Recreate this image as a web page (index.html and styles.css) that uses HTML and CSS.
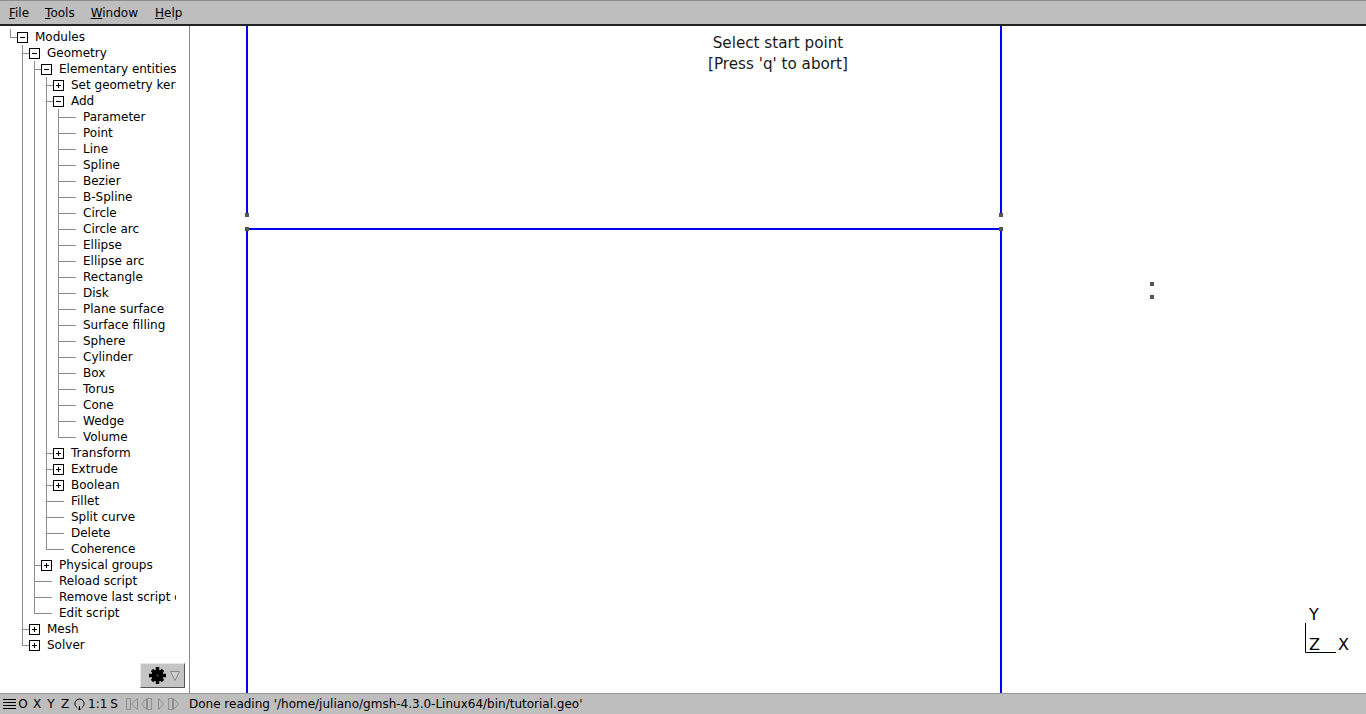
FILE: index.html
```html
<!DOCTYPE html>
<html lang="en">
<head>
	<meta charset="UTF-8">
	<title>Gmsh</title>
	<link rel="stylesheet" href="styles.css">
</head>
<body>
	<div class="menu-bar">
		<span class="menu-item"><u>F</u>ile</span>
		<span class="menu-item"><u>T</u>ools</span>
		<span class="menu-item"><u>W</u>indow</span>
		<span class="menu-item"><u>H</u>elp</span>
	</div>

	<div class="main">
		<div class="side">
			<div class="tree">
				<div class="row"><i class="g elbow"></i><i class="box minus"></i><span>Modules</span></div>
				<div class="row"><i class="g"></i><i class="g tee"></i><i class="box minus"></i><span>Geometry</span></div>
				<div class="row"><i class="g"></i><i class="g pipe"></i><i class="g tee"></i><i class="box minus"></i><span>Elementary entities</span></div>
				<div class="row"><i class="g"></i><i class="g pipe"></i><i class="g pipe"></i><i class="g tee"></i><i class="box plus"></i><span>Set geometry kernel</span></div>
				<div class="row"><i class="g"></i><i class="g pipe"></i><i class="g pipe"></i><i class="g tee"></i><i class="box minus"></i><span>Add</span></div>
				<div class="row"><i class="g"></i><i class="g pipe"></i><i class="g pipe"></i><i class="g pipe"></i><i class="g tee"></i><i class="stub"></i><span>Parameter</span></div>
				<div class="row"><i class="g"></i><i class="g pipe"></i><i class="g pipe"></i><i class="g pipe"></i><i class="g tee"></i><i class="stub"></i><span>Point</span></div>
				<div class="row"><i class="g"></i><i class="g pipe"></i><i class="g pipe"></i><i class="g pipe"></i><i class="g tee"></i><i class="stub"></i><span>Line</span></div>
				<div class="row"><i class="g"></i><i class="g pipe"></i><i class="g pipe"></i><i class="g pipe"></i><i class="g tee"></i><i class="stub"></i><span>Spline</span></div>
				<div class="row"><i class="g"></i><i class="g pipe"></i><i class="g pipe"></i><i class="g pipe"></i><i class="g tee"></i><i class="stub"></i><span>Bezier</span></div>
				<div class="row"><i class="g"></i><i class="g pipe"></i><i class="g pipe"></i><i class="g pipe"></i><i class="g tee"></i><i class="stub"></i><span>B-Spline</span></div>
				<div class="row"><i class="g"></i><i class="g pipe"></i><i class="g pipe"></i><i class="g pipe"></i><i class="g tee"></i><i class="stub"></i><span>Circle</span></div>
				<div class="row"><i class="g"></i><i class="g pipe"></i><i class="g pipe"></i><i class="g pipe"></i><i class="g tee"></i><i class="stub"></i><span>Circle arc</span></div>
				<div class="row"><i class="g"></i><i class="g pipe"></i><i class="g pipe"></i><i class="g pipe"></i><i class="g tee"></i><i class="stub"></i><span>Ellipse</span></div>
				<div class="row"><i class="g"></i><i class="g pipe"></i><i class="g pipe"></i><i class="g pipe"></i><i class="g tee"></i><i class="stub"></i><span>Ellipse arc</span></div>
				<div class="row"><i class="g"></i><i class="g pipe"></i><i class="g pipe"></i><i class="g pipe"></i><i class="g tee"></i><i class="stub"></i><span>Rectangle</span></div>
				<div class="row"><i class="g"></i><i class="g pipe"></i><i class="g pipe"></i><i class="g pipe"></i><i class="g tee"></i><i class="stub"></i><span>Disk</span></div>
				<div class="row"><i class="g"></i><i class="g pipe"></i><i class="g pipe"></i><i class="g pipe"></i><i class="g tee"></i><i class="stub"></i><span>Plane surface</span></div>
				<div class="row"><i class="g"></i><i class="g pipe"></i><i class="g pipe"></i><i class="g pipe"></i><i class="g tee"></i><i class="stub"></i><span>Surface filling</span></div>
				<div class="row"><i class="g"></i><i class="g pipe"></i><i class="g pipe"></i><i class="g pipe"></i><i class="g tee"></i><i class="stub"></i><span>Sphere</span></div>
				<div class="row"><i class="g"></i><i class="g pipe"></i><i class="g pipe"></i><i class="g pipe"></i><i class="g tee"></i><i class="stub"></i><span>Cylinder</span></div>
				<div class="row"><i class="g"></i><i class="g pipe"></i><i class="g pipe"></i><i class="g pipe"></i><i class="g tee"></i><i class="stub"></i><span>Box</span></div>
				<div class="row"><i class="g"></i><i class="g pipe"></i><i class="g pipe"></i><i class="g pipe"></i><i class="g tee"></i><i class="stub"></i><span>Torus</span></div>
				<div class="row"><i class="g"></i><i class="g pipe"></i><i class="g pipe"></i><i class="g pipe"></i><i class="g tee"></i><i class="stub"></i><span>Cone</span></div>
				<div class="row"><i class="g"></i><i class="g pipe"></i><i class="g pipe"></i><i class="g pipe"></i><i class="g tee"></i><i class="stub"></i><span>Wedge</span></div>
				<div class="row"><i class="g"></i><i class="g pipe"></i><i class="g pipe"></i><i class="g pipe"></i><i class="g elbow"></i><i class="stub"></i><span>Volume</span></div>
				<div class="row"><i class="g"></i><i class="g pipe"></i><i class="g pipe"></i><i class="g tee"></i><i class="box plus"></i><span>Transform</span></div>
				<div class="row"><i class="g"></i><i class="g pipe"></i><i class="g pipe"></i><i class="g tee"></i><i class="box plus"></i><span>Extrude</span></div>
				<div class="row"><i class="g"></i><i class="g pipe"></i><i class="g pipe"></i><i class="g tee"></i><i class="box plus"></i><span>Boolean</span></div>
				<div class="row"><i class="g"></i><i class="g pipe"></i><i class="g pipe"></i><i class="g tee"></i><i class="stub"></i><span>Fillet</span></div>
				<div class="row"><i class="g"></i><i class="g pipe"></i><i class="g pipe"></i><i class="g tee"></i><i class="stub"></i><span>Split curve</span></div>
				<div class="row"><i class="g"></i><i class="g pipe"></i><i class="g pipe"></i><i class="g tee"></i><i class="stub"></i><span>Delete</span></div>
				<div class="row"><i class="g"></i><i class="g pipe"></i><i class="g pipe"></i><i class="g elbow"></i><i class="stub"></i><span>Coherence</span></div>
				<div class="row"><i class="g"></i><i class="g pipe"></i><i class="g tee"></i><i class="box plus"></i><span>Physical groups</span></div>
				<div class="row"><i class="g"></i><i class="g pipe"></i><i class="g tee"></i><i class="stub"></i><span>Reload script</span></div>
				<div class="row"><i class="g"></i><i class="g pipe"></i><i class="g tee"></i><i class="stub"></i><span>Remove last script command</span></div>
				<div class="row"><i class="g"></i><i class="g pipe"></i><i class="g elbow"></i><i class="stub"></i><span>Edit script</span></div>
				<div class="row"><i class="g"></i><i class="g tee"></i><i class="box plus"></i><span>Mesh</span></div>
				<div class="row"><i class="g"></i><i class="g elbow"></i><i class="box plus"></i><span>Solver</span></div>
			</div>
			<div class="gear-btn">
				<svg width="17" height="17" viewBox="0 0 17 17">
					<rect x="3" y="3" width="11" height="11" fill="#000"/>
					<path d="M8.5 0v17M0 8.5h17M3 3l11 11M14 3L3 14" stroke="#000" stroke-width="3.5"/>
					<rect x="7.500" y="7.500" width="2" height="2" fill="#444"/>
				</svg>
				<svg width="10" height="10" viewBox="0 0 10 10"><path d="M.5 .5h9L5 9.500z" fill="#cfcfcf" stroke="#8a8a8a"/></svg>
			</div>
		</div>

		<div class="canvas">
			<svg class="model" width="1176" height="667" viewBox="190 26 1176 667">
				<rect x="246" y="26" width="2" height="188" fill="#0000f0"/>
				<rect x="1000" y="26" width="2" height="188" fill="#0000f0"/>
				<rect x="246" y="228" width="2" height="465" fill="#0000f0"/>
				<rect x="1000" y="228" width="2" height="465" fill="#0000f0"/>
				<rect x="246" y="228" width="756" height="2" fill="#0000f0"/>
				<rect x="245" y="213" width="4" height="4" fill="#555"/>
				<rect x="999" y="213" width="4" height="4" fill="#555"/>
				<rect x="245" y="227" width="4" height="4" fill="#555"/>
				<rect x="999" y="227" width="4" height="4" fill="#555"/>
				<rect x="1150" y="282" width="4" height="4" fill="#555"/>
				<rect x="1150" y="295" width="4" height="4" fill="#555"/>
				<path d="M1305.5 623v29.500H1336" fill="none" stroke="#000"/>
			</svg>
			<div class="prompt">Select start point<br>[Press 'q' to abort]</div>
			<span class="axis axis-y">Y</span>
			<span class="axis axis-z">Z</span>
			<span class="axis axis-x">X</span>
		</div>
	</div>

	<div class="status-bar">
		<svg class="ico" width="13" height="13" viewBox="0 0 13 13"><path d="M0 1.500h13M0 4.500h13M0 7.500h13M0 10.500h13" stroke="#000"/></svg>
		<span class="st-btn">O</span>
		<span class="st-btn">X</span>
		<span class="st-btn">Y</span>
		<span class="st-btn">Z</span>
		<svg class="ico loop" width="11" height="13" viewBox="0 0 11 13"><path d="M3 9.500A4.600 4.600 0 1 1 8 9.500M5.500 8v4M4 10.500l1.500 1.500 1.500-1.500" fill="none" stroke="#000"/></svg>
		<span class="st-ratio">1:1</span>
		<span class="st-snap">S</span>
		<svg class="ico play" width="54" height="14" viewBox="0 0 54 14"><path d="M.5 1.500h4v11h-4zM11.500 1.500v11l-6-5.500zM20.500 1.500v11l-5-5.500zM21.500 1.500h4v11h-4zM32.500 1.500v11l5-5.500zM42.500 1.500h4v11h-4zM47.500 1.500v11l5-5.500z" fill="none" stroke="#8e8e8e"/></svg>
		<span class="st-msg">Done reading '/home/juliano/gmsh-4.3.0-Linux64/bin/tutorial.geo'</span>
	</div>
</body>
</html>
```

FILE: styles.css
```css
* {
	box-sizing: border-box;
}

html, body {
	margin: 0;
	height: 100%;
	overflow: hidden;
}

body {
	display: flex;
	flex-direction: column;
	font-family: "DejaVu Sans", sans-serif;
	font-size: 12px;
	color: #000;
	background: #fff;
}

.menu-bar {
	display: flex;
	flex: none;
	height: 26px;
	padding: 1px 0 0 9px;
	gap: 16px;
	align-items: center;
	background: #bebebe;
	border-top: 1px solid #8c8c8c;
	border-bottom: 2px solid #222;
}

.menu-item:last-child {
	margin-left: 1px;
}

.main {
	display: flex;
	flex: 1;
	min-height: 0;
}

.side {
	display: flex;
	flex-direction: column;
	justify-content: space-between;
	flex: none;
	width: 190px;
	padding: 3px 0 5px 5px;
	border-right: 1px solid #8c8c8c;
}

.tree {
	width: 171px;
	overflow: hidden;
}

.row {
	display: flex;
	height: 16px;
	line-height: 16px;
	white-space: nowrap;
}

.g {
	position: relative;
	flex: none;
	width: 12px;
	height: 16px;
}

/* connector lines of the tree */
.pipe::before, .tee::before {
	content: "";
	position: absolute;
	left: 5px;
	top: 0;
	width: 1px;
	height: 16px;
	background: #8c8c8c;
}

.elbow::before {
	content: "";
	position: absolute;
	left: 5px;
	top: 0;
	width: 1px;
	height: 8px;
	background: #8c8c8c;
}

.tee::after, .elbow::after {
	content: "";
	position: absolute;
	left: 5px;
	top: 8px;
	width: 7px;
	height: 1px;
	background: #8c8c8c;
}

.stub {
	flex: none;
	width: 18px;
	height: 9px;
	position: relative;
}

.stub::before {
	content: "";
	position: absolute;
	left: 0;
	top: 8px;
	width: 11px;
	height: 1px;
	background: #8c8c8c;
}

.box {
	position: relative;
	flex: none;
	width: 11px;
	height: 11px;
	margin: 3px 7px 2px 0;
	background: #fff;
	border: 1px solid #000;
}

.box::before {
	content: "";
	position: absolute;
	left: 2px;
	top: 4px;
	width: 5px;
	height: 1px;
	background: #000;
}

.plus::after {
	content: "";
	position: absolute;
	left: 4px;
	top: 2px;
	width: 1px;
	height: 5px;
	background: #000;
}

.gear-btn {
	display: flex;
	align-items: center;
	gap: 4px;
	align-self: flex-end;
	width: 45px;
	height: 25px;
	margin-right: 4px;
	padding-left: 8px;
	background: #c4c4c4;
	border: 1px solid;
	border-color: #e8e8e8 #555 #555 #e8e8e8;
}

.canvas {
	position: relative;
	flex: 1;
	overflow: hidden;
	background: #fff;
}

.model {
	position: absolute;
	left: 0;
	top: 0;
}

.prompt {
	position: absolute;
	left: 388px;
	top: 7px;
	width: 400px;
	text-align: center;
	font-size: 15.2px;
	line-height: 21px;
	color: #1a1a1a;
}

.axis {
	position: absolute;
	font-size: 16px;
	line-height: 18px;
}

.axis-y { left: 1119px; top: 580px; }
.axis-z { left: 1119px; top: 610px; }
.axis-x { left: 1148px; top: 610px; }

.status-bar {
	display: flex;
	flex: none;
	align-items: center;
	height: 21px;
	padding-left: 3px;
	background: #bebebe;
	border-top: 1px solid #9a9a9a;
}

.st-btn {
	flex: none;
	width: 14px;
	text-align: center;
}

.ico {
	flex: none;
}

.loop {
	margin-left: 2px;
}

.st-ratio {
	margin-left: 3px;
}

.st-snap {
	margin-left: 3px;
}

.play {
	margin-left: 8px;
}

.st-msg {
	margin-left: 9px;
}
```
